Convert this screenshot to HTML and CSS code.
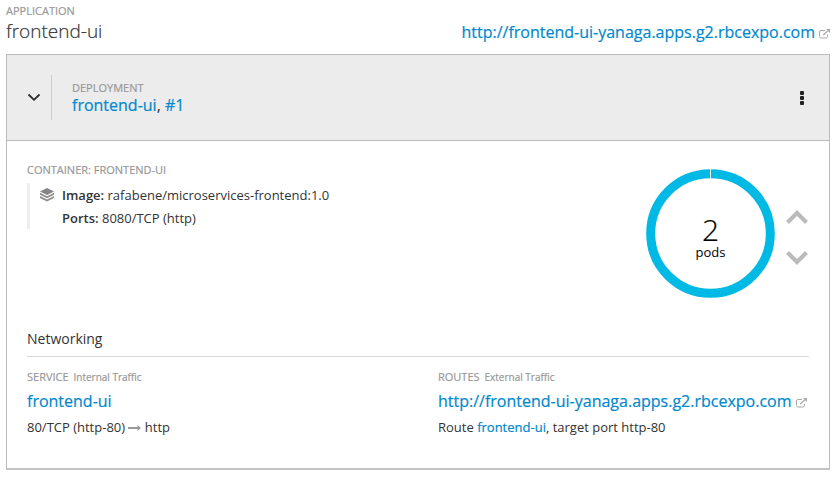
FILE: index.html
```html
<!DOCTYPE html>
<html lang="en">
<head>
<meta charset="utf-8">
<title>frontend-ui</title>
<link rel="stylesheet" href="styles.css">
</head>
<body>
<svg class="defs" width="0" height="0">
  <symbol id="external" viewBox="0 0 11 10">
    <path d="M6 1.500H2A1.500 1.500 0 0 0 .5 3v4.500A1.500 1.500 0 0 0 2 9h5a1.500 1.500 0 0 0 1.500-1.500V5.500" fill="none" stroke="currentColor"/>
    <path d="M4.300 6 8.800 1.700" fill="none" stroke="currentColor" stroke-width="1.300"/>
    <path d="M7 0h4v4z" fill="currentColor"/>
  </symbol>
</svg>
<header class="app-header">
  <div>
    <div class="label">APPLICATION</div>
    <h1>frontend-ui</h1>
  </div>
  <div class="app-url"><a href="#">http://frontend-ui-yanaga.apps.g2.rbcexpo.com</a><svg class="external"><use href="#external"/></svg></div>
</header>
<main class="panel">
  <div class="panel-head">
    <svg class="chevron" width="14" height="9" viewBox="0 0 14 9"><path d="M1.500 1.500 7 6.800l5.500-5.300" fill="none" stroke="#292929" stroke-width="1.800"/></svg>
    <div class="deployment">
      <div class="label">DEPLOYMENT</div>
      <div class="name"><a href="#">frontend-ui</a>, <a href="#">#1</a></div>
    </div>
    <svg class="kebab" width="4" height="14" viewBox="0 0 4 14" fill="#222"><rect width="4" height="4" rx="1"/><rect y="5" width="4" height="4" rx="1"/><rect y="10" width="4" height="4" rx="1"/></svg>
  </div>
  <div class="overview">
    <section>
      <div class="label">CONTAINER: FRONTEND-UI</div>
      <div class="container-info">
        <svg class="layers" width="14" height="14" viewBox="0 0 14 14"><path d="M7 0 14 3.500 7 7 0 3.500z" fill="#858585"/><path d="M0 4.700 7 8.200l7-3.500v2.100L7 10.300 0 6.800zM0 8l7 3.500L14 8v2.100l-7 3.500-7-3.500z" fill="#8f8f8f"/></svg>
        <div>
          <div class="row"><b>Image:</b> rafabene/microservices-frontend:1.0</div>
          <div class="row"><b>Ports:</b> 8080/TCP (http)</div>
        </div>
      </div>
    </section>
    <div class="pods">
      <svg class="donut" width="130" height="130" viewBox="0 0 130 130">
        <circle cx="64.500" cy="65.500" r="59.800" fill="none" stroke="#00b9e4" stroke-width="9"/>
        <path d="M64.500 0v11" stroke="#fff"/>
        <text class="count" x="64.500" y="73">2</text>
        <text class="unit" x="64.500" y="89">pods</text>
      </svg>
      <div class="scale">
        <svg width="22" height="14" viewBox="0 0 22 14"><path d="M1.500 12.500 11 3l9.500 9.500" fill="none" stroke="#bbb" stroke-width="4.200"/></svg>
        <svg width="22" height="14" viewBox="0 0 22 14"><path d="M1.500 1.500 11 11l9.500-9.500" fill="none" stroke="#bbb" stroke-width="4.200"/></svg>
      </div>
    </div>
  </div>
  <div class="networking">
    <h2>Networking</h2>
    <div class="columns">
      <section>
        <div class="label">SERVICE <small>Internal Traffic</small></div>
        <div class="name"><a href="#">frontend-ui</a></div>
        <div class="detail">80/TCP (http-80) <svg class="arrow" width="13" height="6" viewBox="0 0 13 6"><path d="M0 2.100h9.500V0L13 3 9.500 6V3.900H0z" fill="#999"/></svg> http</div>
      </section>
      <section>
        <div class="label">ROUTES <small>External Traffic</small></div>
        <div class="name"><a href="#">http://frontend-ui-yanaga.apps.g2.rbcexpo.com</a><svg class="external"><use href="#external"/></svg></div>
        <div class="detail">Route <a href="#">frontend-ui</a>, target port http-80</div>
      </section>
    </div>
  </div>
</main>
</body>
</html>
```

FILE: styles.css
```css
* { box-sizing: border-box; }
body { margin: 0; padding: 0 10px 0 6px; background: #fff; color: #333; font: 13px/23px "Open Sans", sans-serif; white-space: nowrap; }
a { color: #0088ce; text-decoration: none; -webkit-text-stroke: 0.2px; }
.defs { position: absolute; }
h1, h2 { margin: 0; }
.label { color: #999; font-size: 11px; line-height: 15px; letter-spacing: 0; -webkit-text-stroke: 0.2px; }
.label small { font-size: 10px; margin-left: 2px; }
.app-header { display: flex; justify-content: space-between; height: 54px; padding-top: 3px; }
h1 { padding-top: 1px; font-size: 19px; font-weight: 300; line-height: 24px; -webkit-text-stroke: 0.2px; }
.app-url { padding-top: 17px; font-size: 16px; line-height: 24px; }
.external { width: 11px; height: 10px; margin-left: 4px; color: #aaa; vertical-align: -1px; }
.panel { height: 416px; border: 1px solid #bbb; border-bottom: 2px solid #c4c4c4; }
.panel-head { display: flex; align-items: center; height: 86px; padding: 0 25px 0 20px; background: #ececec; border-bottom: 1px solid #bbb; }
.deployment { flex: 1; height: 45px; margin-left: 10px; padding: 5px 0 0 20px; border-left: 1px solid #ccc; }
.name { font-size: 16px; line-height: 20px; }
.overview { display: flex; justify-content: space-between; height: 185px; padding: 21px 20px 0; }
.container-info { display: flex; margin-top: 6px; height: 46px; padding-left: 10px; border-left: 3px solid #eee; }
.layers { margin: 5px 8px 0 0; }
.row { line-height: 23px; position: relative; top: 1px; }
.row b { font-weight: 600; }
.pods { display: flex; padding-top: 6px; }
.donut text { fill: #000; text-anchor: middle; }
.donut .count { font-size: 30px; font-weight: 300; stroke: #000; stroke-width: 0.2px; }
.donut .unit { font-size: 13px; }
.scale { display: flex; flex-direction: column; gap: 27px; margin: 42px 1px 0 10px; }
.pods .donut { margin-right: 0; }
.networking { padding: 0 20px; }
h2 { height: 31px; font-size: 14px; line-height: 26px; font-weight: 400; border-bottom: 1px solid #d8d8d8; }
.columns { display: grid; grid-template-columns: 411px 1fr; padding-top: 12px; }
.columns .name { margin-top: 6px; }
.detail { margin-top: 5px; }
.arrow { vertical-align: 1px; }
```
